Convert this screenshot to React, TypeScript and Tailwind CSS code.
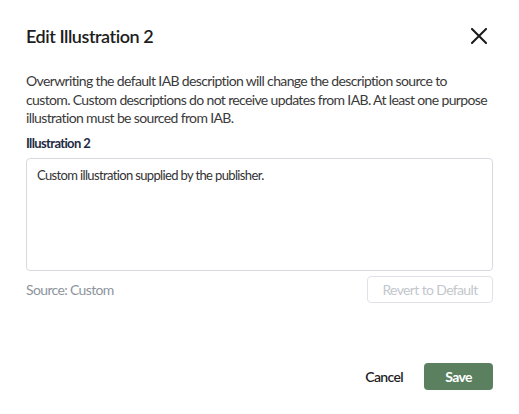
import React from 'react';

export default function App() {
  return (
    <div className="flex h-[414px] w-[519px] flex-col bg-white px-[26px] pt-[24px] font-['Lato','Open_Sans',sans-serif] tracking-[-0.04em]">
      <div className="flex items-center justify-between">
        <h1 className="text-[18px] leading-[24px] font-semibold tracking-[-0.025em] text-[#1d1d1d]">Edit Illustration 2</h1>
        <button aria-label="Close" className="mr-[6px] flex h-[16px] w-[16px] items-center justify-center text-[#1a1a1a]">
          <svg width="16" height="16" viewBox="0 0 16 16" fill="none" stroke="currentColor" strokeWidth="2" strokeLinecap="square">
            <path d="M1 1 15 15M15 1 1 15" />
          </svg>
        </button>
      </div>

      <p className="mt-[24px] text-[14px] leading-[18.5px] text-[#3a3a3a]">
        Overwriting the default IAB description will change the description source to custom. Custom descriptions do not
        receive updates from IAB. At least one purpose illustration must be sourced from IAB.
      </p>

      <label className="mt-[6px] text-[13px] leading-[18px] font-bold text-[#1f2b44]">Illustration 2</label>
      <textarea
        className="mt-[6px] h-[113px] w-full resize-none rounded-[4px] border border-[#d6dadf] px-[10px] pt-[7px] pb-[10px] text-[13px] leading-[18px] text-[#333333] outline-none"
        defaultValue="Custom illustration supplied by the publisher."
      />

      <div className="mt-[5px] flex items-center justify-between">
        <span className="text-[14px] text-[#8d949d]">Source: Custom</span>
        <button disabled className="h-[27px] w-[126px] rounded-[4px] border border-[#dfe2e6] text-[14px] text-[#c3c7cc]">
          Revert to Default
        </button>
      </div>

      <div className="mt-auto mb-[24px] flex items-center justify-end gap-[21px]">
        <button className="text-[14px] font-semibold text-[#1f1f1f]">Cancel</button>
        <button className="h-[27px] w-[69px] rounded-[4px] bg-[#5a8060] text-[14px] font-bold text-white">Save</button>
      </div>
    </div>
  );
}
